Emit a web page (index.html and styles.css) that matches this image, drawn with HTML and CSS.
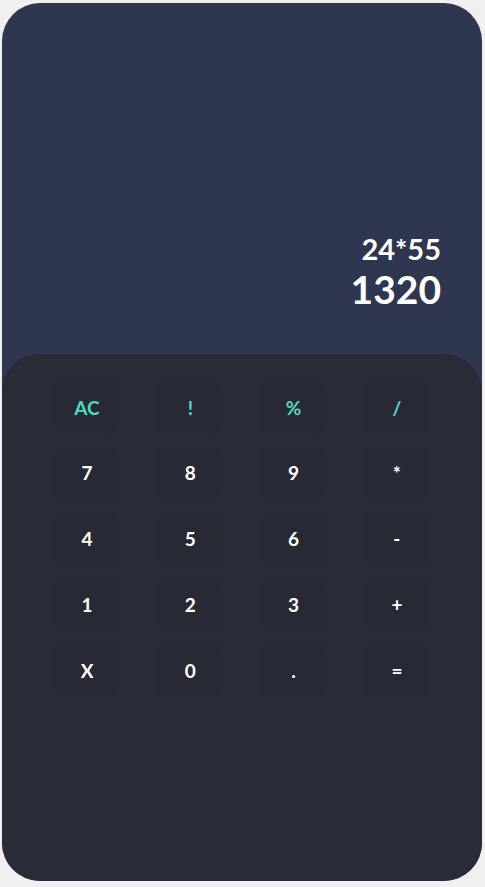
FILE: index.html
```html
<!DOCTYPE html>
<html>
<head>
<meta charset="utf-8">
<link rel="stylesheet" href="styles.css">
</head>
<body>
<div class="calc">
  <div class="screen">
    <div class="expr">24*55</div>
    <div class="result">1320</div>
  </div>
  <div class="pad">
    <button class="key op">AC</button>
    <button class="key op">!</button>
    <button class="key op">%</button>
    <button class="key op">/</button>
    <button class="key">7</button>
    <button class="key">8</button>
    <button class="key">9</button>
    <button class="key">*</button>
    <button class="key">4</button>
    <button class="key">5</button>
    <button class="key">6</button>
    <button class="key">-</button>
    <button class="key">1</button>
    <button class="key">2</button>
    <button class="key">3</button>
    <button class="key">+</button>
    <button class="key">X</button>
    <button class="key">0</button>
    <button class="key">.</button>
    <button class="key">=</button>
  </div>
</div>
</body>
</html>
```
FILE: styles.css
```css
html, body {
  margin: 0;
  padding: 0;
  background: #f0f0f0;
}
body {
  padding: 3px 0 6px 2px;
  font-family: Lato, "Open Sans", sans-serif;
}
.calc {
  width: 480px;
  height: 878px;
  border-radius: 38px;
  background: #2e3650;
  overflow: hidden;
  display: flex;
  flex-direction: column;
}
.screen {
  height: 351px;
  flex: none;
  display: flex;
  flex-direction: column;
  justify-content: flex-end;
  align-items: flex-end;
  padding-right: 41px;
  padding-bottom: 42px;
  box-sizing: border-box;
  color: #ffffff;
  font-weight: 700;
}
.expr {
  font-size: 29px;
  line-height: 30px;
  margin-bottom: 3px;
}
.result {
  font-size: 39px;
  line-height: 45px;
}
.pad {
  flex: 1;
  background: #292c37;
  border-radius: 38px 38px 0 0;
  display: grid;
  grid-template-columns: repeat(4, 66px);
  grid-auto-rows: 52px;
  column-gap: 37.3px;
  row-gap: 13.8px;
  align-content: start;
  padding: 27px 0 0 52px;
}
.key {
  border: none;
  margin: 0;
  padding: 0;
  border-radius: 10px;
  background: #272a34;
  color: #ffffff;
  font-family: Lato, "Open Sans", sans-serif;
  font-weight: 700;
  font-size: 19px;
  display: flex;
  align-items: center;
  justify-content: center;
}
.key.op {
  color: #52d8c3;
}
```
